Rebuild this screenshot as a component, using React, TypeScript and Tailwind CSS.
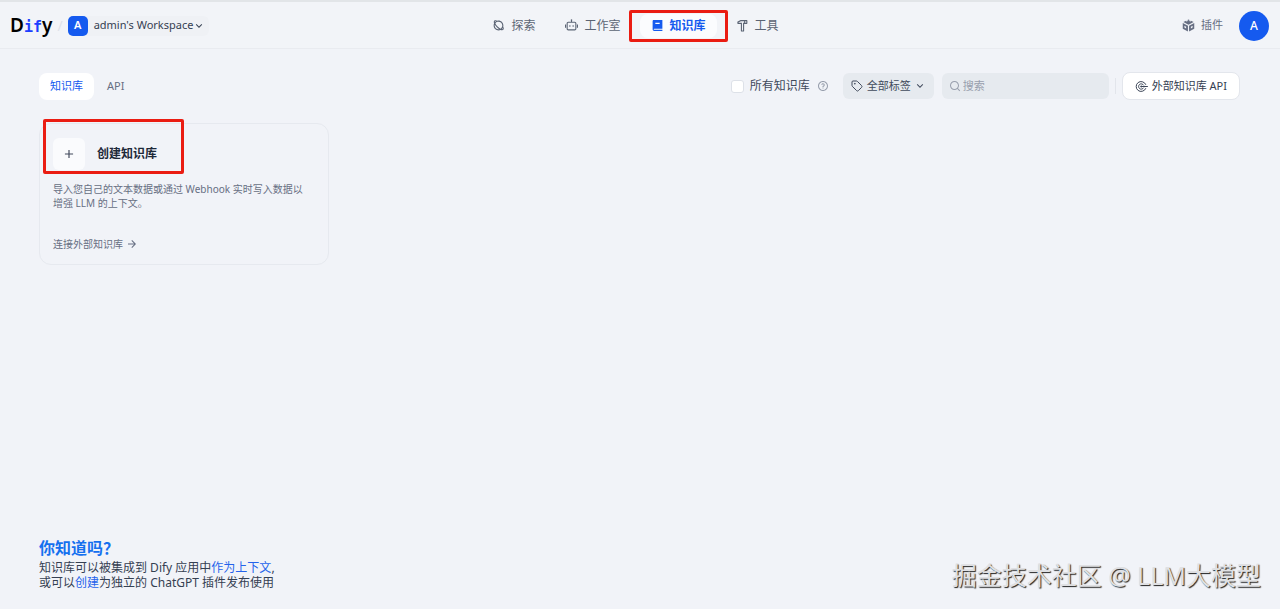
import React, { useState } from 'react';
import { Tag } from 'lucide-react';
import {
  RiAddLine,
  RiArrowDownSLine,
  RiArrowRightLine,
  RiBook2Fill,
  RiHammerLine,
  RiPlanetLine,
  RiQuestionLine,
  RiRobot2Line,
  RiSearchLine,
} from 'react-icons/ri';

const navItems = [
  { name: '探索', icon: RiPlanetLine },
  { name: '工作室', icon: RiRobot2Line },
  { name: '知识库', icon: RiBook2Fill },
  { name: '工具', icon: RiHammerLine },
];

const PluginIcon = () => (
  <svg viewBox="0 0 24 24" className="size-[13px]" fill="currentColor" aria-hidden="true">
    <path d="M12 1 21.5 5.6 12 10.4 2.5 5.6z" />
    <path d="M1.4 7.6 11 12.4V23L1.4 18.2z" />
    <path d="M22.6 7.6 13 12.4V23l9.6-4.8z" />
    <path d="M6 3.4 9 2l2.6 1.3-3 1.5zM15 2l3 1.4-2.6 1.4-3-1.5z" fill="#f2f4f8" />
    <path d="M4.4 12.6 7.6 14.2v3.2l-3.2-1.6zM19.6 12.6l-3.2 1.6v3.2l3.2-1.6z" fill="#f2f4f8" />
  </svg>
);

const ApiConnectionIcon = () => (
  <svg viewBox="0 0 24 24" className="size-[13px]" fill="none" stroke="currentColor" strokeWidth="1.8" strokeLinecap="round" aria-hidden="true">
    <path d="M19.8 8.2A9.2 9.2 0 1 0 19.8 15.8" />
    <path d="M15.9 9.4A5 5 0 1 0 15.9 14.6" />
    <circle cx="11.6" cy="12" r="1.2" />
    <path d="M13 12h10" />
  </svg>
);

const Header: React.FC = () => {
  const [active, setActive] = useState('知识库');

  return (
    <header className="flex h-[49px] items-center border-t-2 border-b border-t-[#e2e5e8] border-b-[#e9ebf0] bg-[#f2f4f8] pt-px pr-[11px] pl-[10px]">
      <div className="flex flex-1 items-center">
        <a href="#" className="text-[19px] leading-6 font-semibold text-black">
          D<span className="font-['DejaVu_Sans_Mono',monospace] text-[15px] font-bold text-[#1c3fff]">if</span>y
        </a>
        <span className="mx-[5px] text-sm text-[#dfe2e8]">/</span>
        <button className="flex items-center gap-[6px] rounded-md bg-[#eff1f5] pr-1 text-[#354052]">
          <span className="flex size-5 items-center justify-center rounded-[5px] bg-[#155aef] text-[11px] font-semibold text-white">A</span>
          <span className="flex items-center text-[11px]">
            admin's Workspace
            <RiArrowDownSLine className="size-3" />
          </span>
        </button>
      </div>
      <nav className="mr-2 flex gap-2">
        {navItems.map(({ name, icon: Icon }) => (
          <div key={name} className="relative">
            <button
              onClick={() => setActive(name)}
              className={`flex h-6 items-center gap-[6px] rounded-lg px-[11px] text-[12px] ${active === name ? 'bg-[#fbfcfe] font-bold text-[#155aef]' : 'text-[#5b6474]'}`}
            >
              <Icon className="size-[13px]" />
              {name}
            </button>
            {name === '知识库' && (
              <span className="pointer-events-none absolute -inset-x-[11px] -inset-y-1 rounded-xs border-[3px] border-[#ea1c12]" />
            )}
          </div>
        ))}
      </nav>
      <div className="flex flex-1 items-center justify-end gap-4">
        <button className="flex items-center gap-[6px] text-[11px] text-[#676f83]">
          <PluginIcon />
          插件
        </button>
        <button className="size-[30px] rounded-full bg-[#155aef] text-[12px] font-medium text-white">A</button>
      </div>
    </header>
  );
};

const Toolbar: React.FC = () => {
  const [tab, setTab] = useState('知识库');
  const [all, setAll] = useState(false);
  const [keyword, setKeyword] = useState('');

  return (
    <div className="flex h-7 items-center justify-between text-[11px]">
      <div className="flex gap-[2px]">
        {['知识库', 'API'].map(name => (
          <button
            key={name}
            onClick={() => setTab(name)}
            className={`h-[27px] rounded-lg px-[11px] ${tab === name ? 'bg-white text-[#155aef]' : 'text-[#676f83]'}`}
          >
            {name}
          </button>
        ))}
      </div>
      <div className="flex items-center">
        <label htmlFor="all-datasets" className="flex items-center gap-[6px] text-[12px] text-[#414a5c]">
          <input
            id="all-datasets"
            type="checkbox"
            checked={all}
            onChange={e => setAll(e.target.checked)}
            className="size-[13px] appearance-none rounded-[3px] border border-[#dde1e8] bg-white checked:bg-[#155aef]"
          />
          所有知识库
        </label>
        <RiQuestionLine className="ml-[7px] size-3 text-[#989fad]" />
        <button className="ml-[14px] flex h-[26px] items-center rounded-md bg-[#e6eaef] px-2 text-[#414a5c]">
          <Tag className="mr-1 size-3" />
          全部标签
          <RiArrowDownSLine className="ml-[3px] size-3" />
        </button>
        <div className="ml-2 flex h-[26px] w-[167px] items-center gap-[2px] rounded-md bg-[#e6eaef] px-[7px]">
          <RiSearchLine className="size-3 shrink-0 text-[#989fad]" />
          <input
            aria-label="搜索"
            placeholder="搜索"
            value={keyword}
            onChange={e => setKeyword(e.target.value)}
            className="w-full min-w-0 bg-transparent outline-none placeholder:text-[#989fad]"
          />
        </div>
        <span className="mx-[6px] h-4 w-px bg-[#e2e5eb]" />
        <button className="flex h-7 items-center gap-1 rounded-lg border border-[#e3e6ec] bg-white px-3 text-[#354052]">
          <ApiConnectionIcon />
          外部知识库 API
        </button>
      </div>
    </div>
  );
};

const CreateCard: React.FC = () => (
  <section className="relative w-[290px] rounded-xl border border-[#e6e9ef] px-[13px] pt-[14px] pb-3">
    <button className="flex items-center gap-3 text-[12px] font-bold text-[#1d2939]">
      <span className="flex size-8 items-center justify-center rounded-md bg-[#fafbfd]">
        <RiAddLine className="size-[14px] text-[#414a5c]" />
      </span>
      创建知识库
    </button>
    <p className="mt-3 pr-2 text-[10px] leading-[14px] text-[#676f83]">导入您自己的文本数据或通过 Webhook 实时写入数据以增强 LLM 的上下文。</p>
    <a href="#" className="mt-[26px] flex items-center gap-[3px] text-[10px] leading-4 text-[#676f83]">
      连接外部知识库
      <RiArrowRightLine className="size-3" />
    </a>
    <span className="pointer-events-none absolute top-[-5px] left-[3px] h-[55px] w-[141px] rounded-xs border-[3px] border-[#ea1c12]" />
  </section>
);

const App: React.FC = () => (
  <div className="relative flex min-h-screen flex-col bg-[#f1f3f8] font-['Noto_Sans','Noto_Sans_CJK_SC',sans-serif]">
    <Header />
    <main className="flex-1 pt-[23px] pr-10 pl-[39px]">
      <Toolbar />
      <div className="mt-[23px]">
        <CreateCard />
      </div>
    </main>
    <footer className="px-[39px] pb-[19px] text-[12px] leading-[15px] text-[#354052]">
      <h3 className="text-[16px] leading-6 font-bold text-[#1570ef]">你知道吗？</h3>
      <p>
        知识库可以被集成到 Dify 应用中<a href="#" className="text-[#2563eb]">作为上下文</a>,
        <br />
        或可以<a href="#" className="text-[#2563eb]">创建</a>为独立的 ChatGPT 插件发布使用
      </p>
    </footer>
    <div className="pointer-events-none absolute right-[19px] bottom-4 text-[25px] leading-9 text-[#dfe0e3] [text-shadow:1px_1px_1px_#222]">
      掘金技术社区 @ LLM大模型
    </div>
  </div>
);

export default App;
